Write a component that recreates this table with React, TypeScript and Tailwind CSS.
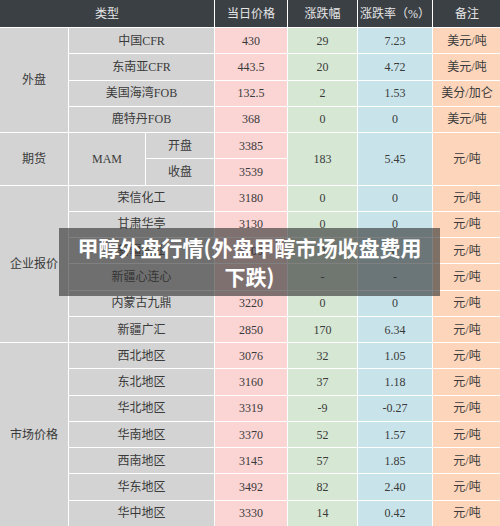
import React from "react";

const font = { fontFamily: "'Liberation Serif', 'Noto Sans CJK SC', serif" };

type Cell = { t: string; cls: string; span?: string };

const G = "bg-[#d3d3d3]";
const P = "bg-[#fbd4d4]";
const GR = "bg-[#d6e8d4]";
const B = "bg-[#c8e4ea]";
const O = "bg-[#fdd5ba]";

function C({ t, cls, span = "" }: Cell) {
  return (
    <div className={`flex items-center justify-center text-[12px] text-[#3a3a3a] ${cls} ${span}`}>
      {t}
    </div>
  );
}

export default function App() {
  const std = (name: string, price: string, chg: string, rate: string, note = "元/吨") => (
    <React.Fragment key={name}>
      <C t={name} cls={G} span="col-span-2" />
      <C t={price} cls={P} />
      <C t={chg} cls={GR} />
      <C t={rate} cls={B} />
      <C t={note} cls={O} />
    </React.Fragment>
  );
  return (
    <div className="relative w-[500px] h-[526px] bg-white overflow-hidden" style={font}>
      <div className="grid h-[526px] w-[500px] gap-px bg-white grid-cols-[68px_76px_68px_72px_69px_74px_68px] grid-rows-[27px_repeat(19,minmax(0,1fr))]">
        <div className="col-span-3 bg-[#3b4045] flex items-center justify-center text-[12px] text-[#e6e6e6]">类型</div>
        <div className="bg-[#3b4045] flex items-center justify-center text-[12px] text-[#e6e6e6]">当日价格</div>
        <div className="bg-[#3b4045] flex items-center justify-center text-[12px] text-[#e6e6e6]">涨跌幅</div>
        <div className="bg-[#3b4045] flex items-center justify-center text-[12px] text-[#e6e6e6]">涨跌率（%）</div>
        <div className="bg-[#3b4045] flex items-center justify-center text-[12px] text-[#e6e6e6]">备注</div>

        <C t="外盘" cls={G} span="row-span-4" />
        {std("中国CFR", "430", "29", "7.23", "美元/吨")}
        {std("东南亚CFR", "443.5", "20", "4.72", "美元/吨")}
        {std("美国海湾FOB", "132.5", "2", "1.53", "美分/加仑")}
        {std("鹿特丹FOB", "368", "0", "0", "美元/吨")}

        <C t="期货" cls={G} span="row-span-2" />
        <C t="MAM" cls={G} span="row-span-2" />
        <C t="开盘" cls={G} />
        <C t="3385" cls={P} />
        <C t="183" cls={GR} span="row-span-2" />
        <C t="5.45" cls={B} span="row-span-2" />
        <C t="元/吨" cls={O} span="row-span-2" />
        <C t="收盘" cls={G} />
        <C t="3539" cls={P} />

        <C t="企业报价" cls={G} span="row-span-6" />
        {std("荣信化工", "3180", "0", "0")}
        {std("甘肃华亭", "3130", "0", "0")}
        {std("新疆新业", "3100", "0", "0")}
        {std("新疆心连心", "-", "-", "-")}
        {std("内蒙古九鼎", "3220", "0", "0")}
        {std("新疆广汇", "2850", "170", "6.34")}

        <C t="市场价格" cls={G} span="row-span-7" />
        {std("西北地区", "3076", "32", "1.05")}
        {std("东北地区", "3160", "37", "1.18")}
        {std("华北地区", "3319", "-9", "-0.27")}
        {std("华南地区", "3370", "52", "1.57")}
        {std("西南地区", "3145", "57", "1.85")}
        {std("华东地区", "3492", "82", "2.40")}
        {std("华中地区", "3330", "14", "0.42")}
      </div>

      <div
        className="absolute left-[59px] top-[228px] w-[381px] h-[68px] bg-[rgba(50,50,50,0.62)] flex flex-col items-center justify-center text-white font-bold text-[21px] leading-[29px]"
        style={{ fontFamily: "'Noto Sans CJK SC', sans-serif" }}
      >
        <div>甲醇外盘行情(外盘甲醇市场收盘费用</div>
        <div>下跌)</div>
      </div>
    </div>
  );
}
